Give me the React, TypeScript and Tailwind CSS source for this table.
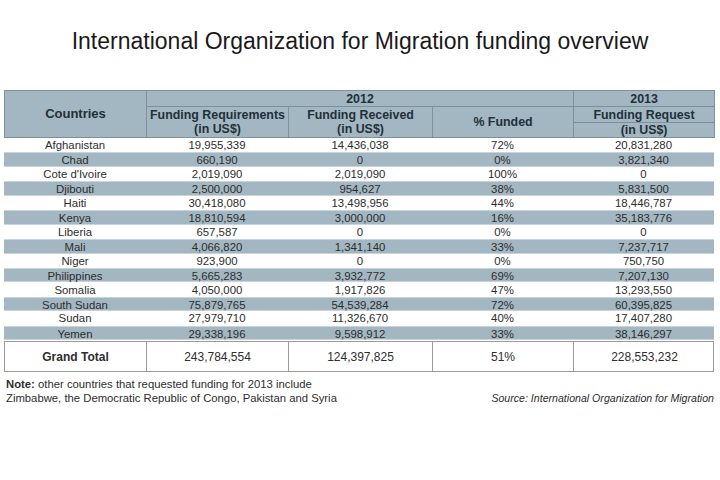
import React from 'react';

type Row = {
  country: string;
  required: string;
  received: string;
  funded: string;
  request: string;
};

const rows: Row[] = [
  { country: 'Afghanistan', required: '19,955,339', received: '14,436,038', funded: '72%', request: '20,831,280' },
  { country: 'Chad', required: '660,190', received: '0', funded: '0%', request: '3,821,340' },
  { country: "Cote d'Ivoire", required: '2,019,090', received: '2,019,090', funded: '100%', request: '0' },
  { country: 'Djibouti', required: '2,500,000', received: '954,627', funded: '38%', request: '5,831,500' },
  { country: 'Haiti', required: '30,418,080', received: '13,498,956', funded: '44%', request: '18,446,787' },
  { country: 'Kenya', required: '18,810,594', received: '3,000,000', funded: '16%', request: '35,183,776' },
  { country: 'Liberia', required: '657,587', received: '0', funded: '0%', request: '0' },
  { country: 'Mali', required: '4,066,820', received: '1,341,140', funded: '33%', request: '7,237,717' },
  { country: 'Niger', required: '923,900', received: '0', funded: '0%', request: '750,750' },
  { country: 'Philippines', required: '5,665,283', received: '3,932,772', funded: '69%', request: '7,207,130' },
  { country: 'Somalia', required: '4,050,000', received: '1,917,826', funded: '47%', request: '13,293,550' },
  { country: 'South Sudan', required: '75,879,765', received: '54,539,284', funded: '72%', request: '60,395,825' },
  { country: 'Sudan', required: '27,979,710', received: '11,326,670', funded: '40%', request: '17,407,280' },
  { country: 'Yemen', required: '29,338,196', received: '9,598,912', funded: '33%', request: '38,146,297' },
];

const cols = 'grid grid-cols-[142px_142px_144px_141px_141px]';
const th = 'border border-[#7d909b] bg-[#a3b7c2] text-center font-bold text-[12.4px] leading-[14px] text-[#223039] p-0';

const App: React.FC = () => {
  return (
    <div className="w-[720px] h-[480px] bg-white font-['Liberation_Sans',Arial,sans-serif] text-[#2e2e2e] overflow-hidden">
      {/* Title */}
      <h1 className="pt-[26px] h-[90px] text-center text-[23px] leading-[30px] text-[#1a1a1a]">
        International Organization for Migration funding overview
      </h1>

      <div className="ml-[4px] w-[710px]">
        {/* Header */}
        <table className="w-[710px] table-fixed border-collapse">
          <colgroup>
            <col className="w-[142px]" />
            <col className="w-[142px]" />
            <col className="w-[144px]" />
            <col className="w-[141px]" />
            <col className="w-[141px]" />
          </colgroup>
          <thead>
            <tr className="h-[16px]">
              <th rowSpan={3} className={`${th} text-[13px]`}>Countries</th>
              <th colSpan={3} className={th}>2012</th>
              <th className={th}>2013</th>
            </tr>
            <tr className="h-[16px]">
              <th rowSpan={2} className={th}>Funding Requirements<br />(in US$)</th>
              <th rowSpan={2} className={th}>Funding Received<br />(in US$)</th>
              <th rowSpan={2} className={th}>% Funded</th>
              <th className={th}>Funding Request</th>
            </tr>
            <tr className="h-[15px]">
              <th className={th}>(in US$)</th>
            </tr>
          </thead>
        </table>

        {/* Data rows */}
        <div className="flex flex-col">
          {rows.map((r, i) => (
            <div
              key={r.country}
              className={`${cols} h-[14.45px] items-center text-center text-[11.4px] leading-[14px] ${
                i % 2 === 1 ? 'bg-[#a3b7c2] border-y border-[#c9d4da]' : 'bg-white'
              }`}
            >
              <span>{r.country}</span>
              <span>{r.required}</span>
              <span>{r.received}</span>
              <span>{r.funded}</span>
              <span>{r.request}</span>
            </div>
          ))}
        </div>

        {/* Grand total */}
        <div className={`${cols} mt-[1px] h-[31px] border border-[#9a9a9a] text-center text-[12px]`}>
          <div className="flex items-center justify-center font-bold border-r border-[#9a9a9a]">Grand Total</div>
          <div className="flex items-center justify-center border-r border-[#9a9a9a]">243,784,554</div>
          <div className="flex items-center justify-center border-r border-[#9a9a9a]">124,397,825</div>
          <div className="flex items-center justify-center border-r border-[#9a9a9a]">51%</div>
          <div className="flex items-center justify-center">228,553,232</div>
        </div>
      </div>

      {/* Notes */}
      <div className="mt-[5px] px-[6px] flex justify-between items-end text-[11.3px] leading-[14px] text-[#2e2e2e]">
        <p>
          <span className="font-bold">Note:</span> other countries that requested funding for 2013 include
          <br />
          Zimbabwe, the Democratic Republic of Congo, Pakistan and Syria
        </p>
        <p className="italic text-[10.6px]">Source: International Organization for Migration</p>
      </div>
    </div>
  );
};

export default App;
